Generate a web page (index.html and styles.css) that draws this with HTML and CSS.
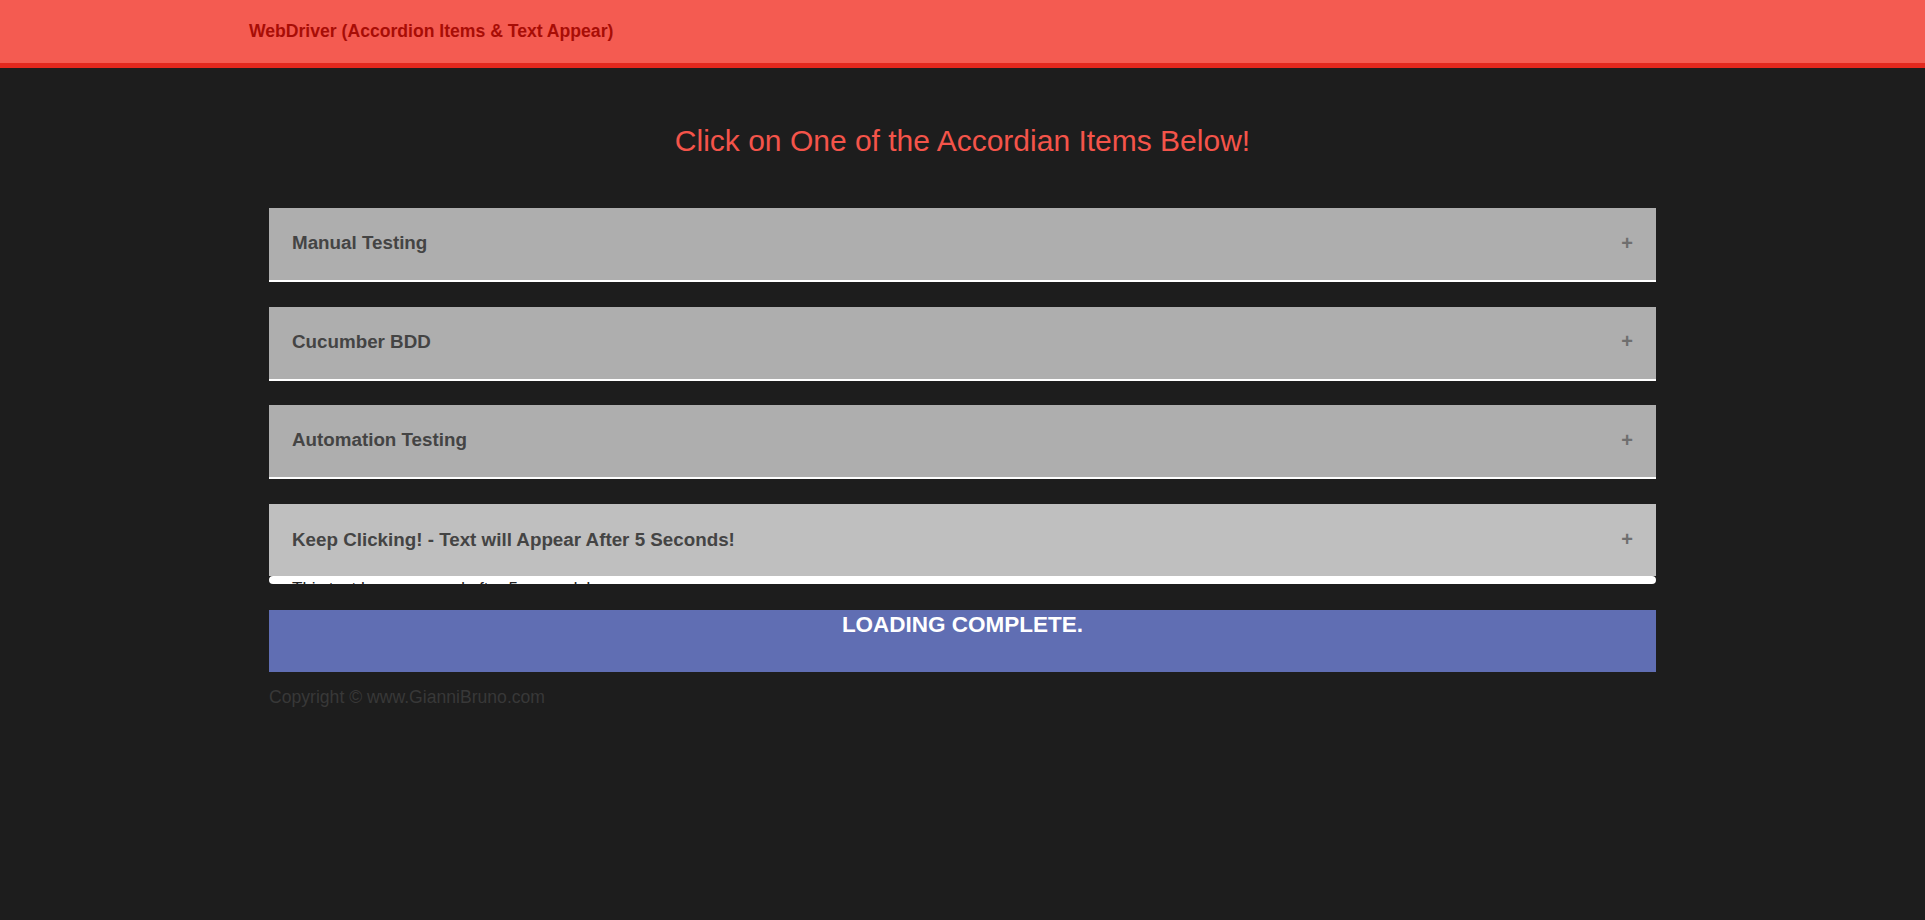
FILE: index.html
```html
<!DOCTYPE html>
<html lang="en">
<head>
<meta charset="utf-8">
<title>WebDriver (Accordion Items &amp; Text Appear)</title>
<link rel="stylesheet" href="styles.css">
</head>
<body>
<header class="topbar">
  <div class="brand">WebDriver (Accordion Items &amp; Text Appear)</div>
</header>
<main class="main">
  <h1 class="title">Click on One of the Accordian Items Below!</h1>
  <div class="accordion">
    <div class="acc-item">
      <button class="acc-head"><span>Manual Testing</span><span class="plus">+</span></button>
    </div>
    <div class="acc-item">
      <button class="acc-head"><span>Cucumber BDD</span><span class="plus">+</span></button>
    </div>
    <div class="acc-item">
      <button class="acc-head"><span>Automation Testing</span><span class="plus">+</span></button>
    </div>
    <div class="acc-item">
      <button class="acc-head active"><span>Keep Clicking! - Text will Appear After 5 Seconds!</span><span class="plus">+</span></button>
      <div class="acc-panel"><p>This text has appeared after 5 seconds!</p></div>
    </div>
  </div>
  <div class="loading">LOADING COMPLETE.</div>
  <p class="copyright">Copyright © www.GianniBruno.com</p>
</main>
</body>
</html>
```
FILE: styles.css
```css
html, body {
  margin: 0;
  padding: 0;
}
body {
  background: #1d1d1d;
  font-family: "Liberation Sans", Arial, sans-serif;
  min-height: 920px;
}
.topbar {
  height: 63px;
  background: #f45b51;
  border-bottom: 5px solid #e3281e;
  display: flex;
  align-items: center;
  padding-left: 249px;
}
.brand {
  color: #a80d06;
  font-weight: bold;
  font-size: 17.6px;
}
.main {
  width: 1387px;
  margin: 0 auto;
}
.title {
  margin: 55px 0 49px;
  font-size: 30px;
  line-height: 36px;
  font-weight: normal;
  color: #f4544a;
  text-align: center;
}
.accordion {
  display: flex;
  flex-direction: column;
}
.acc-item {
  margin-bottom: 24.5px;
}
.acc-item:last-child {
  margin-bottom: 26px;
}
.acc-head {
  display: flex;
  justify-content: space-between;
  align-items: center;
  width: 100%;
  height: 74px;
  padding: 0 23px 2px 23px;
  border: 0;
  border-bottom: 2px solid #ffffff;
  background: #aeaeae;
  color: #444444;
  font-family: "Liberation Sans", Arial, sans-serif;
  font-size: 18.8px;
  font-weight: bold;
  text-align: left;
  box-sizing: border-box;
}
.acc-head.active {
  background: #bfbfbf;
  border-bottom: 0;
  height: 72px;
  padding-bottom: 0;
}
.plus {
  color: #6f6f6f;
  font-size: 20px;
  font-weight: bold;
}
.acc-panel {
  height: 8px;
  overflow: hidden;
  background: #ffffff;
  border-radius: 5px;
  padding: 0 23px;
}
.acc-panel p {
  margin: 0;
  padding-top: 3px;
  font-size: 17px;
  line-height: 20px;
  color: #222222;
}
.loading {
  height: 62px;
  box-sizing: border-box;
  padding-top: 2px;
  background: #606eb3;
  color: #ffffff;
  font-size: 22.5px;
  line-height: 26px;
  font-weight: bold;
  text-align: center;
}
.copyright {
  margin: 15px 0 0;
  font-size: 17.6px;
  line-height: 20px;
  color: #383838;
}
```
